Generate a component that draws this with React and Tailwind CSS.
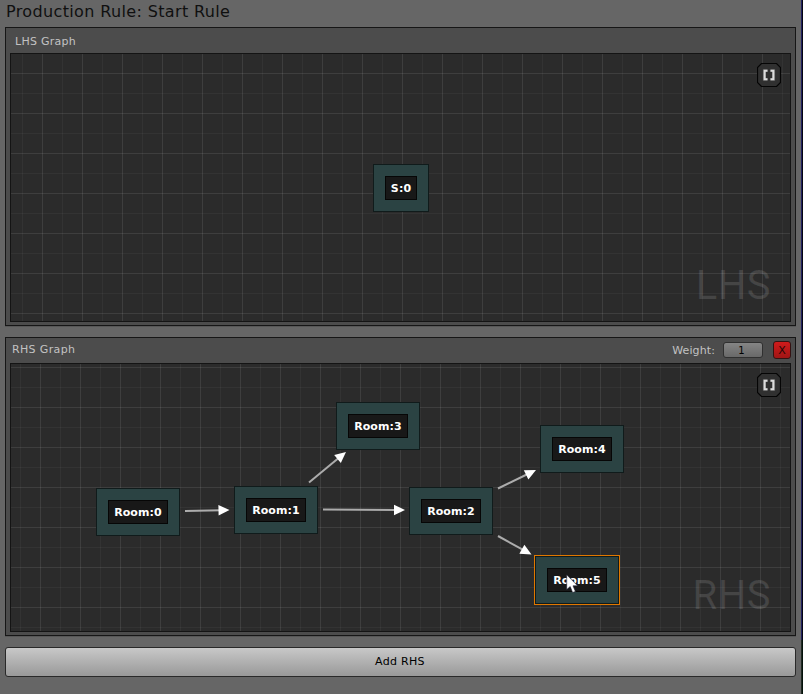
import React from "react";

const W = 781;
const H = 269;

function Grid({ startX, startY, majorX, majorY, edges = [] }) {
  const xs = [];
  for (let x = startX; x < W - 1; x += 20) xs.push(x);
  const ys = [];
  for (let y = startY; y < H - 1; y += 20) ys.push(y);
  return (
    <svg width={W} height={H} className="block" shapeRendering="auto">
      <rect width={W} height={H} fill="#2b2b2b" />
      {xs.map((x, i) => (
        <rect key={x} x={x} y="0" width="1" height={H} fill="#fff" opacity={i % 2 === majorX ? 0.09 : 0.04} />
      ))}
      {ys.map((y, i) => (
        <rect key={y} x="0" y={y} width={W} height="1" fill="#fff" opacity={i % 2 === majorY ? 0.09 : 0.04} />
      ))}
      <rect x="0.5" y="0.5" width={W - 1} height={H - 1} fill="none" stroke="#141414" />
      {edges.map(([x1, y1, x2, y2]) => {
        const len = Math.hypot(x2 - x1, y2 - y1);
        const deg = (Math.atan2(y2 - y1, x2 - x1) * 180) / Math.PI;
        return (
          <g key={`${x1}-${y1}`} transform={`translate(${x1} ${y1}) rotate(${deg})`}>
            <rect x="0" y="-1" width={len - 8} height="2" fill="#acacac" />
            <path d={`M${len} 0 L${len - 11} -5.2 V5.2 Z`} fill="#fff" />
          </g>
        );
      })}
    </svg>
  );
}

function Node({ place, label, selected }) {
  return (
    <div
      className={`absolute ${place} flex h-12 items-center justify-center border border-[#101b1b] bg-[#2b4343] ${
        selected ? "outline outline-1 outline-[#e07800]" : ""
      }`}
    >
      <span
        className={`flex h-6 items-center justify-center border border-[#060606] bg-[#181818] text-[11px] leading-none font-bold tracking-[0.1px] whitespace-nowrap text-white ${
          label.length > 4 ? "w-15" : "w-8"
        }`}
      >
        {label}
      </span>
    </div>
  );
}

function FrameButton() {
  return (
    <button className="absolute top-[10px] left-[747px] size-6">
      <svg width="24" height="24" viewBox="0 0 24 24">
        <path d="M4.5 0.5H19.5L23.5 4.5V19.5L19.5 23.5H4.5L0.5 19.5V4.5Z" fill="#303030" stroke="#050505" strokeWidth="1.2" />
        <path d="M10.6 7.6H7.4V16.4H10.6M13.4 7.6H16.6V16.4H13.4" fill="none" stroke="#777" strokeWidth="3" opacity="0.5" />
        <path d="M10.5 7.7H7.6V16.3H10.5M13.5 7.7H16.4V16.3H13.5" fill="none" stroke="#dcdcdc" strokeWidth="2.1" />
      </svg>
    </button>
  );
}

function Watermark({ children }) {
  return (
    <div className="pointer-events-none absolute right-[20px] bottom-[14px] font-['Roboto',sans-serif] text-[40px] leading-[44px] tracking-[0.5px] text-white/[0.12]">
      {children}
    </div>
  );
}

export default function App() {
  return (
    <div className="flex h-[694px] w-[803px] overflow-hidden bg-[#666666] font-['DejaVu_Sans',Verdana,sans-serif] text-[11px]">
      <main className="flex w-[801px] flex-col pl-[5px]">
        <h1 className="h-[27px] pl-px text-[16px] leading-[23px] tracking-[0.36px] whitespace-nowrap text-[#101010]">
          Production Rule: Start Rule
        </h1>

        <section className="flex h-[299px] w-[791px] flex-col border border-[#161616] bg-[#4c4c4c] px-1 shadow-[0_1px_0_#575757]">
          <header className="flex h-[25px] items-center pt-[1px] pl-[5px] tracking-[0.25px] text-[#c2c2c2]">
            <span className="leading-none">LHS Graph</span>
          </header>
          <div className="relative h-[269px] w-[781px]">
            <Grid startX={12} startY={20} majorX={1} majorY={0} />
            <Node place="left-[363px] top-[111px] w-14" label="S:0" />
            <Watermark>LHS</Watermark>
            <FrameButton />
          </div>
        </section>

        <section className="mt-[11px] flex h-[299px] w-[791px] flex-col border border-[#161616] bg-[#4c4c4c] px-1 shadow-[0_1px_0_#575757]">
          <header className="flex h-[25px] items-center pl-[2px] text-[#c2c2c2]">
            <span className="flex-1 pb-[2px] leading-none tracking-[0.35px]">RHS Graph</span>
            <span className="mr-[8px] leading-none tracking-[0.1px]">Weight:</span>
            <div className="mr-[10px] mb-px flex h-4 w-10 items-center justify-center rounded-[3px] border border-[#303030] bg-linear-to-b from-[#858585] to-[#696969] pr-[3px] text-[10px] text-black">
              1
            </div>
            <button className="mb-px flex h-[18px] w-[18px] items-center justify-center rounded-[3px] border border-[#351313] bg-linear-to-b from-[#d11b1b] to-[#a11515] text-[11px] leading-none text-[#260606]">
              X
            </button>
          </header>
          <div className="relative h-[269px] w-[781px]">
            <Grid
              startX={10}
              startY={4}
              majorX={1}
              majorY={0}
              edges={[
                [175, 148, 219.5, 147],
                [299, 119.5, 336, 89],
                [313, 146.5, 395, 147],
                [488, 125.5, 526, 107],
                [488, 173, 521.5, 191.5],
              ]}
            />
            <Node place="left-[86px] top-[125px] w-21" label="Room:0" />
            <Node place="left-[224px] top-[123px] w-21" label="Room:1" />
            <Node place="left-[326px] top-[39px] w-21" label="Room:3" />
            <Node place="left-[399px] top-[124px] w-21" label="Room:2" />
            <Node place="left-[530px] top-[62px] w-21" label="Room:4" />
            <Node place="left-[525px] top-[193px] w-21" label="Room:5" selected />
            <svg className="absolute top-[211px] left-[556px]" width="13" height="20" viewBox="0 0 13 20">
              <path d="M0.7 0.8V15.6L4.2 12.5L6.6 18.6L9.4 17.4L7 11.8H11.6Z" fill="#fff" stroke="#1c1c30" strokeWidth="0.6" />
            </svg>
            <Watermark>RHS</Watermark>
            <FrameButton />
          </div>
        </section>

        <button className="mt-[11px] flex h-[30px] w-[791px] items-center justify-center rounded-[3px] border border-[#292929] bg-linear-to-b from-[#c8c8c8] to-[#999999] pt-px pr-px tracking-[0.3px] text-black">
          Add RHS
        </button>
      </main>
      <aside className="flex w-[2px] flex-col">
        <div className="h-[640px] border-l border-[#202060] bg-[#050510]" />
        <div className="flex-1 border-l border-[#202a24] bg-[#04120a]" />
      </aside>
    </div>
  );
}
